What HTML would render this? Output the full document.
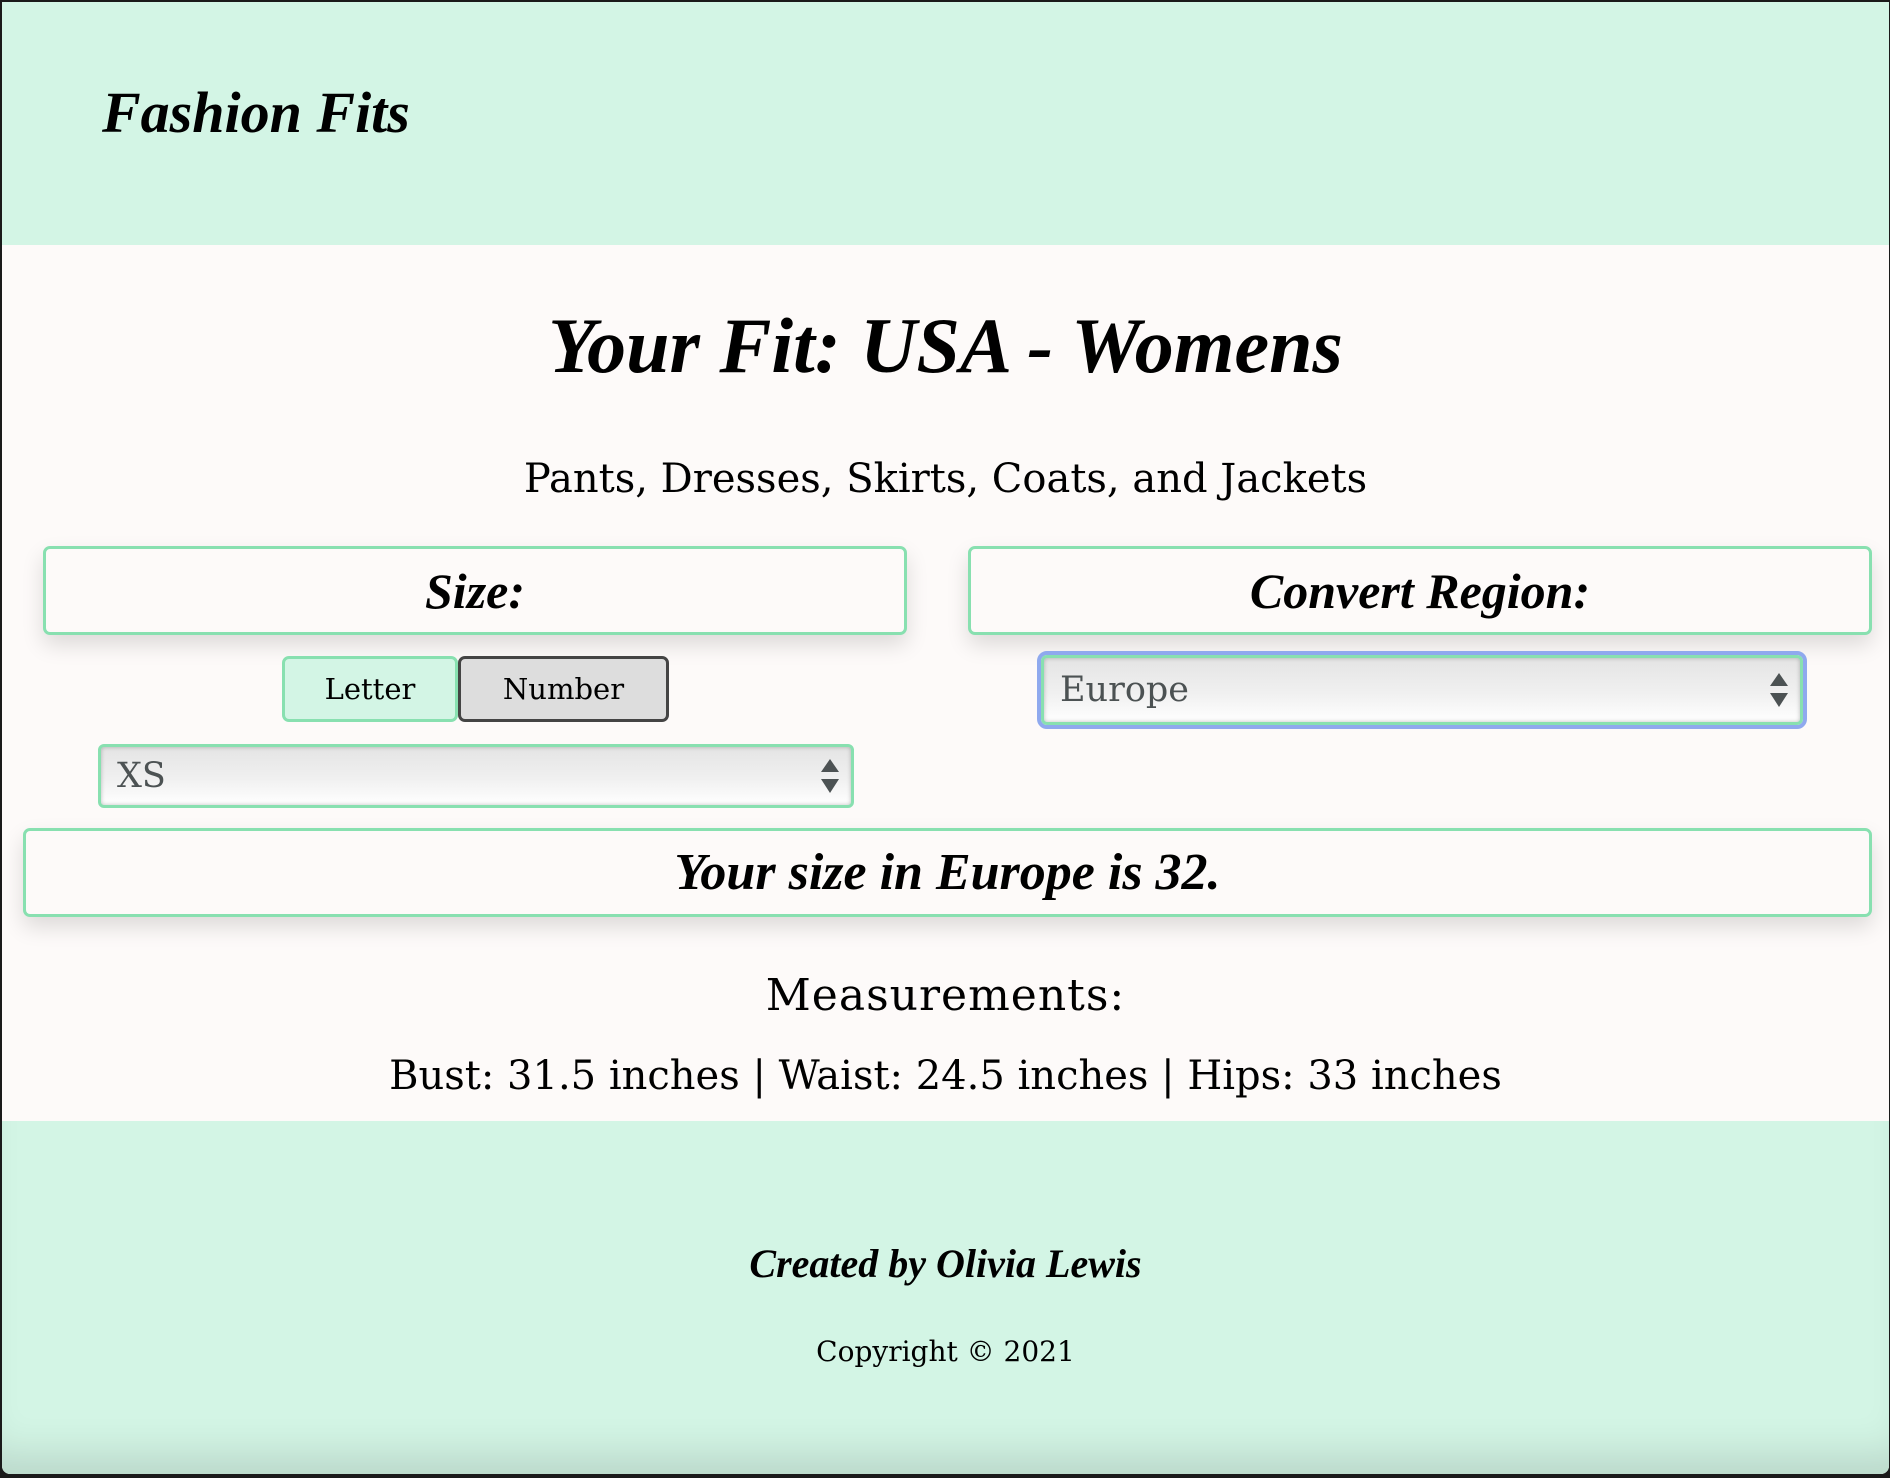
<!DOCTYPE html>
<html><head><meta charset="utf-8"><style>
html,body{margin:0;padding:0;width:1890px;height:1478px;overflow:hidden;background:#1a1a1a;}
#pg{position:absolute;left:2px;top:2px;width:1887px;height:1472px;background:#fdfaf9;border-radius:0 0 8px 8px;overflow:hidden;}
.a{position:absolute;}
.fancy{font-family:"Liberation Serif",serif;font-weight:bold;font-style:italic;color:#000;}
.slab{font-family:"DejaVu Serif",serif;color:#000;}
.box{position:absolute;border:3px solid #88e0b0;border-radius:7px;background:#fdfaf9;box-shadow:0 10px 22px rgba(0,0,0,0.13);box-sizing:border-box;display:flex;align-items:center;justify-content:center;}
.sel{position:absolute;box-sizing:border-box;border:3px solid #88e0b0;border-radius:6px;background:linear-gradient(#e4e4e4,#f0f0f0 55%,#fff);box-shadow:inset 0 0 4px rgba(0,0,0,0.25);font-family:"DejaVu Serif",serif;color:#4c5253;font-size:35px;display:flex;align-items:center;padding-left:16px;}
.arr{position:absolute;right:12px;top:50%;transform:translateY(-50%);width:18px;height:36px;}
</style></head><body><div id="pg">
<div class="a" style="left:0;top:0;width:1887px;height:243px;background:#d3f5e5;"></div>
<div class="a fancy" style="left:100px;top:78px;font-size:58px;line-height:66px;">Fashion Fits</div>
<div class="a fancy" style="left:0;width:1887px;top:298px;text-align:center;font-size:78px;line-height:92px;">Your Fit: USA - Womens</div>
<div class="a slab" style="left:0;width:1887px;top:451px;text-align:center;font-size:40px;line-height:52px;">Pants, Dresses, Skirts, Coats, and Jackets</div>
<div class="box" style="left:41px;top:544px;width:864px;height:89px;"><span class="fancy" style="font-size:50px;">Size:</span></div>
<div class="box" style="left:966px;top:544px;width:904px;height:89px;"><span class="fancy" style="font-size:50px;">Convert Region:</span></div>
<div class="a slab" style="left:280px;top:654px;width:176px;height:66px;box-sizing:border-box;border:3px solid #88e0b0;border-radius:7px;background:#d3f5e5;display:flex;align-items:center;justify-content:center;font-size:29px;">Letter</div>
<div class="a slab" style="left:456px;top:654px;width:211px;height:66px;box-sizing:border-box;border:3px solid #444;border-radius:7px;background:#dddddd;display:flex;align-items:center;justify-content:center;font-size:29px;">Number</div>
<div class="sel" style="left:96px;top:742px;width:756px;height:64px;">XS<svg class="arr" viewBox="0 0 18 36"><path d="M9 1L18 14H0Z M0 21H18L9 35Z" fill="#4c5253"/></svg></div>
<div class="a" style="left:1035px;top:649px;width:770px;height:78px;border:4px solid #8fa9ee;border-radius:10px;box-sizing:border-box;"></div>
<div class="sel" style="left:1039px;top:653px;width:762px;height:70px;">Europe<svg class="arr" viewBox="0 0 18 36"><path d="M9 1L18 14H0Z M0 21H18L9 35Z" fill="#4c5253"/></svg></div>
<div class="box" style="left:21px;top:826px;width:1849px;height:89px;"><span class="fancy" style="font-size:52px;">Your size in Europe is 32.</span></div>
<div class="a slab" style="left:0;width:1887px;top:966px;text-align:center;font-size:44px;line-height:56px;letter-spacing:1px;">Measurements:</div>
<div class="a slab" style="left:0;width:1887px;top:1047px;text-align:center;font-size:40px;line-height:54px;">Bust: 31.5 inches | Waist: 24.5 inches | Hips: 33 inches</div>
<div class="a" style="left:0;top:1119px;width:1887px;height:353px;background:#d3f5e5;box-shadow:inset 0 -40px 40px -20px rgba(0,0,0,0.12);"></div>
<div class="a fancy" style="left:0;width:1887px;top:1238px;text-align:center;font-size:40px;line-height:48px;">Created by Olivia Lewis</div>
<div class="a slab" style="left:0;width:1887px;top:1330px;text-align:center;font-size:28px;line-height:40px;">Copyright © 2021</div>
</div></body></html>
